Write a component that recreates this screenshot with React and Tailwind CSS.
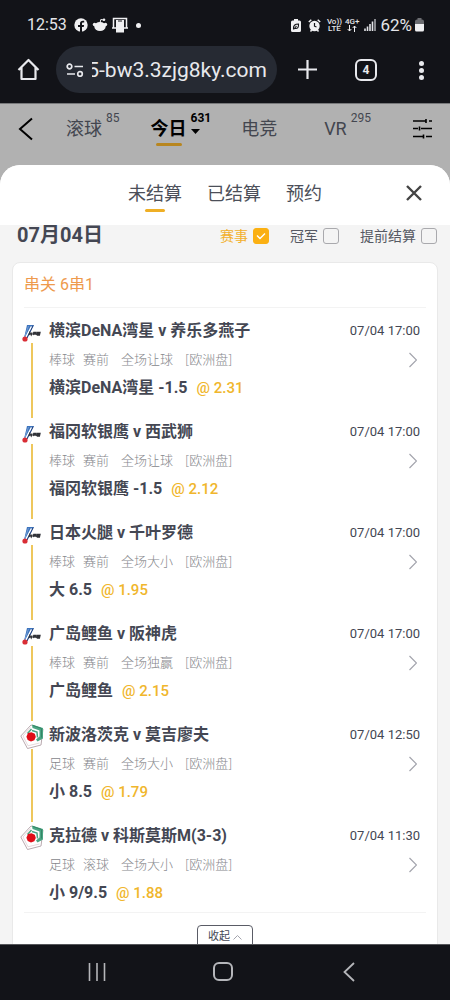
import React, { useState } from "react";

const bets = [
  { logo: "npb", title: "横滨DeNA湾星 v 养乐多燕子", time: "07/04 17:00", meta: ["棒球", "赛前", "全场让球", "[欧洲盘]"], pick: "横滨DeNA湾星 -1.5", odds: "2.31" },
  { logo: "npb", title: "福冈软银鹰 v 西武狮", time: "07/04 17:00", meta: ["棒球", "赛前", "全场让球", "[欧洲盘]"], pick: "福冈软银鹰 -1.5", odds: "2.12" },
  { logo: "npb", title: "日本火腿 v 千叶罗德", time: "07/04 17:00", meta: ["棒球", "赛前", "全场大小", "[欧洲盘]"], pick: "大 6.5", odds: "1.95" },
  { logo: "npb", title: "广岛鲤鱼 v 阪神虎", time: "07/04 17:00", meta: ["棒球", "赛前", "全场独赢", "[欧洲盘]"], pick: "广岛鲤鱼", odds: "2.15" },
  { logo: "football", title: "新波洛茨克 v 莫吉廖夫", time: "07/04 12:50", meta: ["足球", "赛前", "全场大小", "[欧洲盘]"], pick: "小 8.5", odds: "1.79" },
  { logo: "football", title: "克拉德 v 科斯莫斯M(3-3)", time: "07/04 11:30", meta: ["足球", "滚球", "全场大小", "[欧洲盘]"], pick: "小 9/9.5", odds: "1.88" },
];

const StatusBar = () => (
  <div className="flex h-[46px] items-center pt-1 pl-[27px] pr-[26px] text-[#e4e5e9]">
    <span className="text-base">12:53</span>
    <svg className="ml-[7px] h-[14px] w-[14px]" viewBox="0 0 14 14">
      <circle cx="7" cy="7" r="6.7" fill="#f0f0f2" />
      <path d="M6 14V9H4V7h2V5.6C6 3.6 7.2 2.7 9 2.7h1.2v1.9h-1C8.3 4.6 8 5 8 5.7V7h2.1l-.4 2H8v5z" fill="#121318" />
    </svg>
    <svg className="ml-1 h-4 w-4" viewBox="0 0 16 16" fill="#f0f0f2">
      <ellipse cx="8" cy="9.5" rx="5.7" ry="4.5" />
      <circle cx="2.5" cy="7.5" r="1.7" />
      <circle cx="13.5" cy="7.5" r="1.7" />
      <circle cx="12" cy="2.8" r="1.3" />
      <path d="M8 6l.8-3.5L12 3" fill="none" stroke="#f0f0f2" />
    </svg>
    <svg className="ml-1 h-4 w-4" viewBox="0 0 16 16">
      <path d="M1.5 11V1.5h13V11M0 11h4M12 11h4" fill="none" stroke="#f0f0f2" strokeWidth="1.5" />
      <path d="M4 3h8v12.5H4z" fill="#f0f0f2" />
      <path d="M3.5 3v7M12.5 3v7M6 4h4" stroke="#121318" strokeWidth="1" />
    </svg>
    <span className="ml-2 h-[5px] w-[5px] rounded-full bg-[#f0f0f2]" />

    <svg className="ml-auto h-[13px] w-[10px]" viewBox="0 0 10 13">
      <path d="M3 0h4v1.5h1.5Q10 1.5 10 3v8.5Q10 13 8.5 13h-7Q0 13 0 11.5V3q0-1.5 1.5-1.5H3z" fill="#f0f0f2" />
      <path d="M2.5 10Q2 5 7.5 5 8 10 4 9.5M2.5 10.5L5.5 7" fill="none" stroke="#121318" strokeWidth="1.1" />
    </svg>
    <svg className="ml-[7px] h-[13px] w-[13px]" viewBox="0 0 13 13">
      <path d="M.8 3L3.3.8M12.2 3L9.7.8M2.5 12.5l1.2-1.5M10.5 12.5L9.3 11" stroke="#f0f0f2" strokeWidth="1.5" />
      <circle cx="6.5" cy="7" r="5.2" fill="#f0f0f2" />
      <path d="M6.5 4v3.2L8.5 8" fill="none" stroke="#121318" strokeWidth="1.2" />
    </svg>
    <span className="ml-1.5 flex flex-col items-center text-[8px] leading-[7px] font-medium">
      <span>Vo))</span>
      <span>LTE</span>
    </span>
    <span className="ml-[3px] flex flex-col items-center text-[8px] leading-[7px] font-medium">
      <span>4G+</span>
      <svg className="h-[7px] w-[10px]" viewBox="0 0 10 7" fill="none" stroke="#f0f0f2">
        <path d="M2.5 0v6M.7 4l1.8 2 1.8-2M7.5 7V1M5.7 3l1.8-2 1.8 2" />
      </svg>
    </span>
    <svg className="ml-[5px] h-3 w-3" viewBox="0 0 12 12" stroke="#e4e5e9" strokeWidth="1.6">
      <path d="M1 12V9.5M3.5 12V7.5M6 12V5M8.5 12V2.5" />
      <path d="M11 12V0" opacity=".7" />
    </svg>
    <span className="ml-1 text-[17px] leading-5">62%</span>
    <svg className="ml-[3px] h-[14px] w-[9px]" viewBox="0 0 9 14">
      <path d="M2.5 0h4v1.5H7q2 0 2 2V7H0V3.5q0-2 2-2h.5z" fill="#6b6c70" />
      <path d="M0 6h9v6q0 1.5-1.5 1.5h-6Q0 13.5 0 12z" fill="#f0f0f2" />
    </svg>
  </div>
);

const BrowserBar = () => (
  <div className="flex h-[57px] items-start pl-[17px] pr-[26px] text-[#e8e9ed]">
    <button aria-label="主页" className="mt-3">
      <svg className="h-[23px] w-[23px]" viewBox="0 0 23 23" fill="none" stroke="currentColor" strokeWidth="2.2" strokeLinejoin="round">
        <path d="M1.5 12L11.5 2l10 10M4.5 9.5V21h14V9.5" />
      </svg>
    </button>
    <div className="ml-4 flex h-[47px] min-w-0 flex-1 items-center rounded-full bg-[#262a33] px-[10px]">
      <svg className="h-[14px] w-[18px] shrink-0" viewBox="0 0 18 14" fill="none" stroke="currentColor" strokeWidth="1.7">
        <circle cx="3.5" cy="3.5" r="2.3" />
        <path d="M8.5 3.5H17M1 11h8" />
        <circle cx="14" cy="11" r="2.3" />
      </svg>
      <div className="ml-2 flex min-w-0 flex-1 justify-end overflow-hidden text-[21px] leading-8 whitespace-nowrap">
        <span>5-bw3.3zjg8ky.com</span>
      </div>
    </div>
    <button aria-label="新标签页" className="mt-3 ml-[21px]">
      <svg className="h-[23px] w-[19px]" viewBox="0 0 19 23" stroke="currentColor" strokeWidth="2.2">
        <path d="M9.5 2v19M0 11.5h19" />
      </svg>
    </button>
    <button className="mt-[13px] ml-[38px] flex h-[22px] w-[22px] items-center justify-center rounded-md border-2 border-current text-[12px] leading-none font-bold">
      4
    </button>
    <button aria-label="菜单" className="mt-[13px] ml-[42px] flex h-[22px] flex-col items-center justify-center gap-0.5">
      <span className="h-[5px] w-[5px] rounded-full bg-current" />
      <span className="h-[5px] w-[5px] rounded-full bg-current" />
      <span className="h-[5px] w-[5px] rounded-full bg-current" />
    </button>
  </div>
);

const SportTab = ({ label, count, active, className }) => (
  <button
    className={`flex items-start gap-1 ${active ? "font-bold text-black" : "text-[#43464f]"} ${className || ""}`}
  >
    <span className="flex flex-col items-center text-lg leading-9">
      {label}
      {active && <span className="-mt-1 h-[3px] w-[26px] rounded-full bg-[#b8861f]" />}
    </span>
    {count && (
      <span className="flex flex-col items-start gap-1 text-xs leading-[14px]">
        {count}
        {active && (
          <svg className="h-[5px] w-[9px]" viewBox="0 0 9 5">
            <path d="M0 0h9L4.5 5z" />
          </svg>
        )}
      </span>
    )}
  </button>
);

const SportTabs = () => (
  <nav className="flex h-[62px] items-start border-t border-[#77787a] px-[18px] pt-[7px]">
    <button aria-label="返回" className="mt-1.5">
      <svg className="h-6 w-[15px]" viewBox="0 0 15 24" fill="none" stroke="black" strokeWidth="2">
        <path d="M14 1.5L2 12l12 10.5" />
      </svg>
    </button>
    <SportTab label="滚球" count="85" className="ml-[33px]" />
    <SportTab label="今日" count="631" active className="ml-[31px]" />
    <SportTab label="电竞" className="ml-[30px]" />
    <SportTab label="VR" count="295" className="ml-[47px]" />
    <button aria-label="筛选" className="mt-[7px] ml-auto">
      <svg className="h-[21px] w-[19px]" viewBox="0 0 19 21" fill="none" stroke="black" strokeWidth="1.6">
        <path d="M0 3h13M16 3h3M0 10.5h5M8 10.5h11M0 18.5h10M13 18.5h6" />
        <path d="M13 1v4M6.5 8.5v4M10.5 16.5v4" />
      </svg>
    </button>
  </nav>
);

const Filter = ({ label, defaultChecked }) => (
  <label className="flex items-center gap-[5px] text-sm text-[#565963] has-checked:text-[#f2b02c]">
    {label}
    <span className="grid h-4 w-4">
      <input
        type="checkbox"
        defaultChecked={defaultChecked}
        className="peer col-start-1 row-start-1 h-4 w-4 appearance-none rounded-[3px] border border-[#a9a9ad] checked:border-[#fbb012] checked:bg-[#fbb012]"
      />
      <svg
        className="pointer-events-none invisible col-start-1 row-start-1 h-4 w-4 peer-checked:visible"
        viewBox="0 0 16 16"
        fill="none"
        stroke="white"
        strokeWidth="1.4"
      >
        <path d="M4 7.5l3 3 5-5" />
      </svg>
    </span>
  </label>
);

const NpbLogo = () => (
  <svg className="h-[26px] w-6" viewBox="0 0 24 26">
    <path d="M7 8h7L7 21.5 4 21z" fill="#3d74bd" />
    <path d="M11.5 9.5L6 20" stroke="white" strokeWidth="1.6" />
    <path d="M8.5 9L5 19" stroke="#6f9bd4" strokeWidth="1" />
    <path d="M13.2 8.5L7 21" stroke="#243f78" strokeWidth="1" />
    <circle cx="5" cy="22" r="2.6" fill="#d92d35" />
    <path d="M9 18l.8-2.500 1.400 2.500.9-2.500M13 18l.8-2.500h2l-.4 1.500h-2M16.500 18l.8-2.500h2.700l-.6 2.500h-2.700M17.200 16.700h2" fill="none" stroke="#303238" strokeWidth="1.3" />
  </svg>
);

const FootballLogo = () => (
  <svg className="h-7 w-6" viewBox="0 0 24 28">
    <path d="M11 4L.8 15l6.700 12.500L21 24l2-16z" fill="white" stroke="#b9a9af" strokeWidth="1" />
    <path d="M10.500 6.500L3 15l5 9.800L19.500 22" fill="none" stroke="#dcc9cd" strokeWidth=".7" />
    <path d="M12 3.500l11 3.500v10.500l-5.500 3-1.500-2 3.500-3V9.500L12.500 7z" fill="#4aa583" />
    <path d="M11.500 8L7.500 12.500M12 9.500l5 1.500.5 5.500" fill="none" stroke="#4aa583" strokeWidth="1.5" />
    <path d="M13 4.500l8.500 3v9" fill="none" stroke="#2f7d60" strokeWidth=".8" />
    <path d="M8 12l3.500-.8 3.300 1.500 1 3.300-1.500 3.300-3.300 1.200-3.300-1.500-1.300-3.300z" fill="#e00d17" />
  </svg>
);

const BetRow = ({ bet, last }) => (
  <li className="flex gap-[5px]">
    <div className="flex w-6 shrink-0 flex-col items-center">
      {bet.logo === "npb" ? <NpbLogo /> : <FootballLogo />}
      {!last && <div className="w-0.5 flex-1 bg-[#eec75c]" />}
    </div>
    <div className={`min-w-0 flex-1 ${last ? "pb-[5px]" : "pb-4"}`}>
      <div className="flex items-center justify-between leading-7 text-[#444753]">
        <h3 className="text-base leading-7 font-bold">{bet.title}</h3>
        <time className="text-[13px]">{bet.time}</time>
      </div>
      <div className="flex h-[29px] items-center justify-between">
        <p className="flex items-baseline text-[13px] leading-7 font-light text-[#86878c]">
          <span className="mr-2">{bet.meta[0]}</span>
          <span className="mr-3">{bet.meta[1]}</span>
          <span className="mr-3">{bet.meta[2]}</span>
          <span className="font-['Noto_Sans_CJK_SC',sans-serif]">{bet.meta[3]}</span>
        </p>
        <button aria-label="详情">
          <svg className="mr-[3px] h-4 w-2" viewBox="0 0 8 16" fill="none" stroke="#a3a4ad" strokeWidth="1.2">
            <path d="M.5 1l7 7-7 7" />
          </svg>
        </button>
      </div>
      <p className="flex h-7 items-baseline gap-[9px]">
        <span className="text-base leading-7 font-bold text-[#444753]">{bet.pick}</span>
        <span className="text-[15px] leading-7 font-medium text-[#f0b62c]">@ {bet.odds}</span>
      </p>
    </div>
  </li>
);

const sheetTabs = ["未结算", "已结算", "预约"];

const BetSheet = () => {
  const [tab, setTab] = useState("未结算");

  return (
    <section className="flex min-h-0 flex-1 flex-col overflow-hidden rounded-t-[20px] bg-[#f4f4f4]">
      <header className="grid h-[60px] shrink-0 grid-cols-[1fr_auto_1fr] items-start bg-white pt-3">
        <div className="col-start-2 flex gap-[25px]">
          {sheetTabs.map((name) => (
            <button
              key={name}
              onClick={() => setTab(name)}
              className="flex flex-col items-center text-lg leading-[33px] text-[#4c4f59]"
            >
              {name}
              {tab === name && <span className="-mt-px h-[3px] w-5 rounded-full bg-[#efaf25]" />}
            </button>
          ))}
        </div>
        <button aria-label="关闭" className="mt-2 mr-7 justify-self-end">
          <svg className="h-4 w-4" viewBox="0 0 16 16" stroke="#444" strokeWidth="2.4">
            <path d="M1 1l14 14M15 1L1 15" />
          </svg>
        </button>
      </header>

      <div className="min-h-0 flex-1 overflow-y-auto px-3 [scrollbar-width:none]">
        <div className="mb-[15px] flex h-[22px] items-center justify-between pr-px pl-[5px]">
          <h2 className="self-start text-xl leading-5 font-bold text-[#444753]">07月04日</h2>
          <div className="flex gap-[21px]">
            <Filter label="赛事" defaultChecked />
            <Filter label="冠军" />
            <Filter label="提前结算" />
          </div>
        </div>

        <div className="rounded-lg border border-[#e9e9e9] bg-white pb-4">
          <div className="mx-[11px] border-b border-[#f3f3f3] text-base leading-[44px] text-[#ee9a4d]">
            串关 6串1
          </div>
          <ul className="mt-[9px] pr-[17px] pl-[7px]">
            {bets.map((bet, i) => (
              <BetRow key={bet.title} bet={bet} last={i === bets.length - 1} />
            ))}
          </ul>
          <div className="mx-[11px] flex justify-center border-t border-[#f3f3f3] pt-3">
            <button className="flex h-6 w-14 items-center justify-center gap-[3px] rounded border border-[#5a5c66] text-[11px] text-[#444753]">
              收起
              <svg className="h-[5px] w-[9px]" viewBox="0 0 9 5" fill="none" stroke="#a3a4ad">
                <path d="M.5 4.5l4-4 4 4" />
              </svg>
            </button>
          </div>
        </div>
      </div>
    </section>
  );
};

const SystemNav = () => (
  <nav className="flex h-14 shrink-0 items-center justify-around border-t border-[#55565a] bg-[#121318] pr-[38px] pb-0.5 pl-[34px]">
    <button aria-label="最近" className="flex w-5 justify-center">
      <svg className="h-[18px] w-[18px]" viewBox="0 0 18 18" stroke="#b5b6ba" strokeWidth="1.6">
        <path d="M1.5 0v18M9 0v18M16.5 0v18" />
      </svg>
    </button>
    <button aria-label="主屏幕" className="h-[19px] w-5 rounded-md border-2 border-[#b5b6ba]" />
    <button aria-label="返回" className="flex w-5 justify-center">
      <svg className="h-5 w-3" viewBox="0 0 12 20" fill="none" stroke="#b5b6ba" strokeWidth="1.8">
        <path d="M11 1L1.5 10l9.5 9" />
      </svg>
    </button>
  </nav>
);

export default function App() {
  return (
    <div className="flex h-screen flex-col overflow-hidden bg-[#b1b1b1] font-[Roboto,'Noto_Sans_CJK_SC',sans-serif]">
      <div className="shrink-0 bg-[#121318]">
        <StatusBar />
        <BrowserBar />
      </div>
      <SportTabs />
      <BetSheet />
      <SystemNav />
    </div>
  );
}
